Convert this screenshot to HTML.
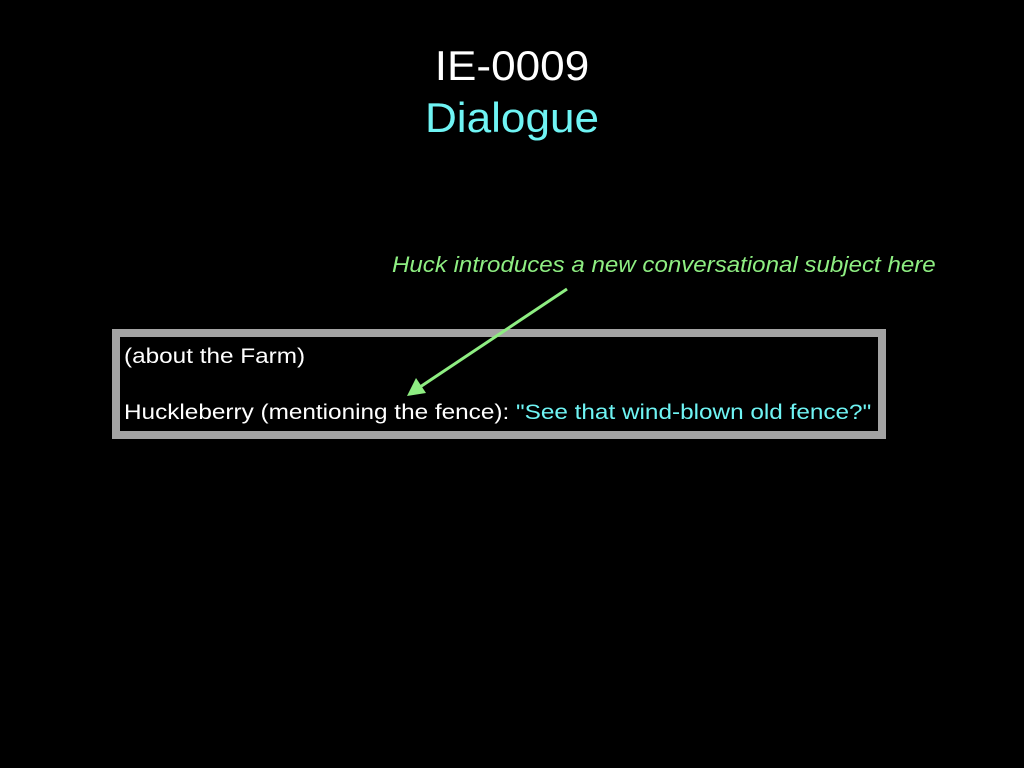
<!DOCTYPE html>
<html><head><style>
body{margin:0;width:1024px;height:768px;background:#000;position:relative;font-family:"Liberation Sans",sans-serif;overflow:hidden}
.t{position:absolute;left:0;width:1024px;text-align:center;font-size:42px;line-height:48px;transform:scaleX(1.05)}
.box{position:absolute;left:112px;top:329px;width:758px;height:94px;border:8px solid #a3a3a3;color:#fff;font-size:21px}
.l{position:absolute;left:4px;white-space:nowrap;transform-origin:0 0;transform:scaleX(1.158)}
</style></head><body>
<div class="t" style="top:42px;color:#fff">IE-0009</div>
<div class="t" style="top:94px;color:#6ff4f4">Dialogue</div>
<div style="position:absolute;left:392px;top:252px;color:#8eee82;font-style:italic;font-size:22px;white-space:nowrap;transform-origin:0 0;transform:scaleX(1.095)">Huck introduces a new conversational subject here</div>
<div class="box">
<div class="l" style="top:8px">(about the Farm)</div>
<div class="l" style="top:64px">Huckleberry (mentioning the fence): <span style="color:#6ff4f4">"See that wind-blown old fence?"</span></div>
</div>
<svg style="position:absolute;left:0;top:0" width="1024" height="768">
<line x1="567" y1="289" x2="420" y2="387" stroke="#8eee82" stroke-width="3"/>
<polygon points="407,396 416,378 426,393" fill="#8eee82"/>
</svg>
</body></html>
